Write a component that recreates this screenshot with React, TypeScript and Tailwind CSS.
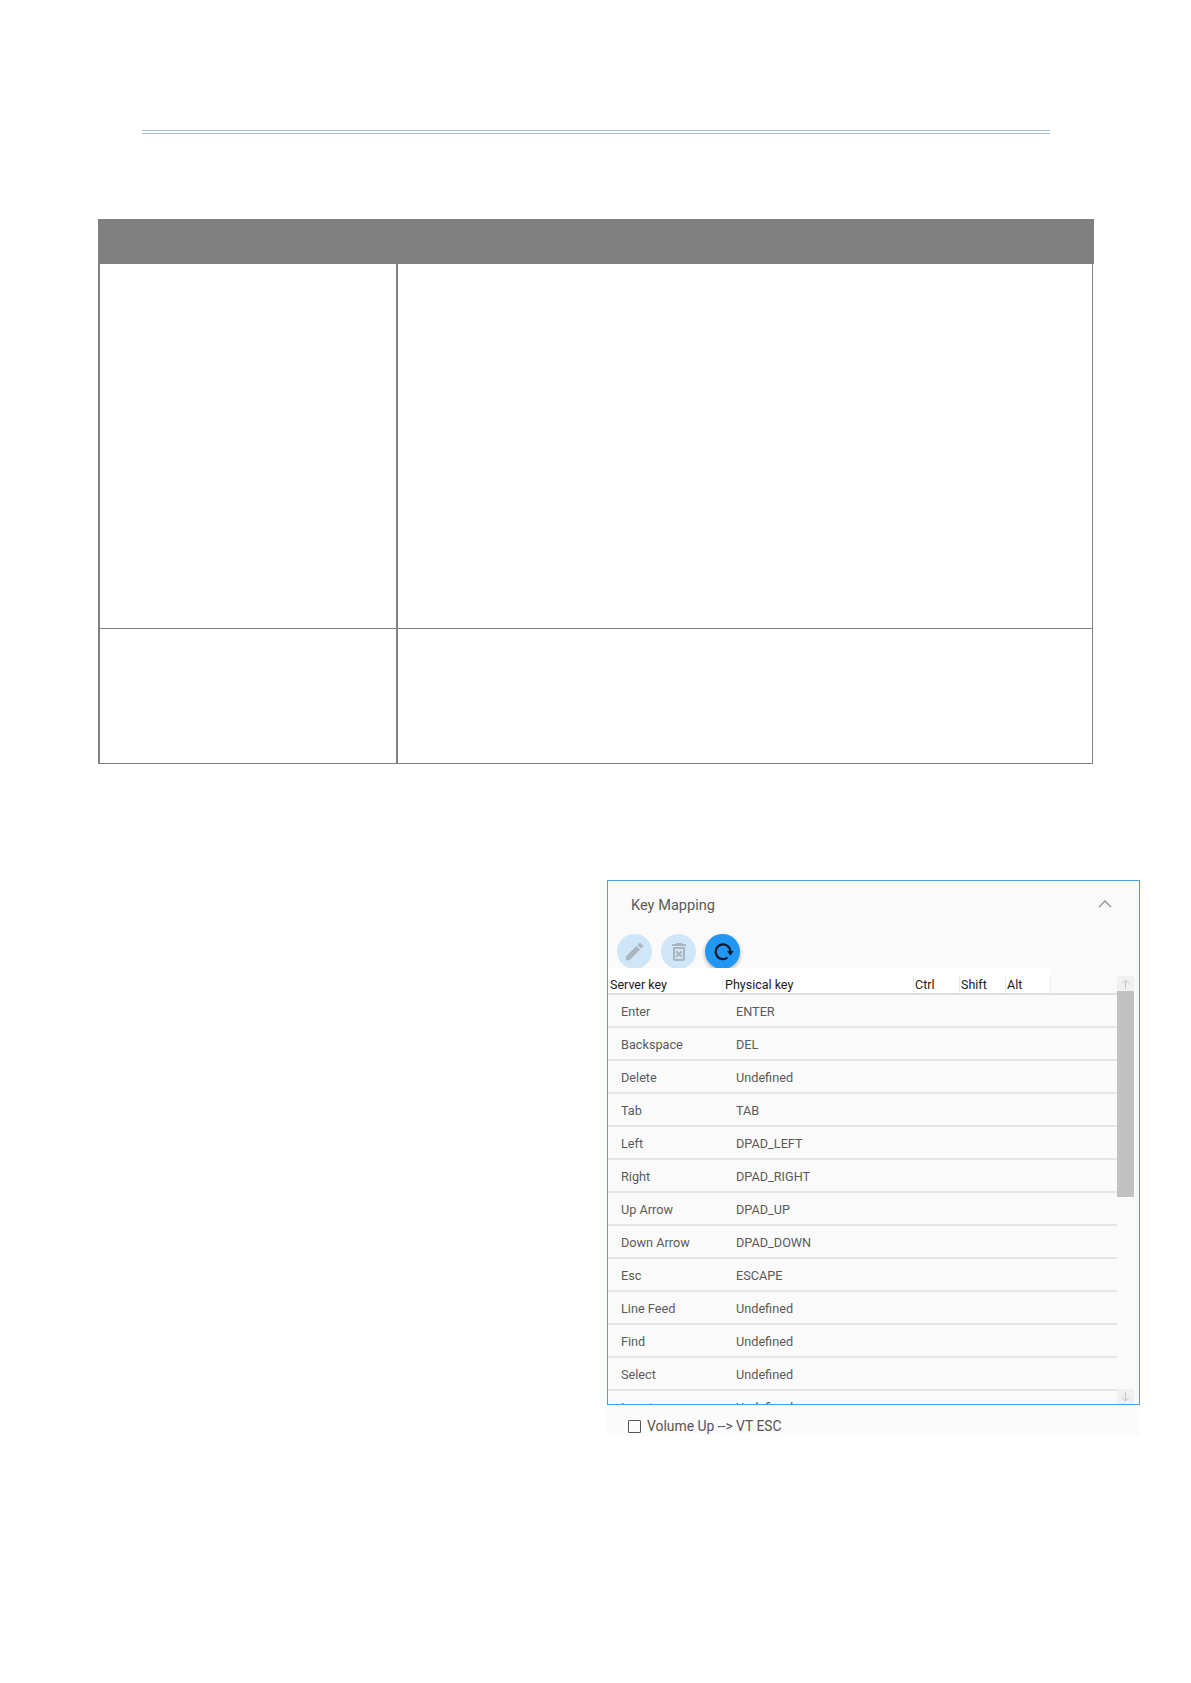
const rows = [
  ['Enter', 'ENTER'],
  ['Backspace', 'DEL'],
  ['Delete', 'Undefined'],
  ['Tab', 'TAB'],
  ['Left', 'DPAD_LEFT'],
  ['Right', 'DPAD_RIGHT'],
  ['Up Arrow', 'DPAD_UP'],
  ['Down Arrow', 'DPAD_DOWN'],
  ['Esc', 'ESCAPE'],
  ['Line Feed', 'Undefined'],
  ['Find', 'Undefined'],
  ['Select', 'Undefined'],
  ['Insert', 'Undefined'],
];

const RoundButton = ({ children, active }: { children: React.ReactNode; active?: boolean }) => (
  <div
    className={`w-[35px] h-[35px] rounded-full flex items-center justify-center ${
      active ? 'bg-[#2196f3] shadow-[0_2px_4px_rgba(0,0,0,0.3)]' : 'bg-[#cfe6f8]'
    }`}
  >
    {children}
  </div>
);

export default function App() {
  return (
    <div className="w-[1191px] h-[1683px] bg-white pt-[130px] font-['Roboto','Noto_Sans',sans-serif]">
      {/* double rule under the page header */}
      <div className="ml-[142px] w-[908px] h-[4px] border-y border-[#a3b9cc]" />

      {/* empty spec table */}
      <div className="ml-[98px] mt-[85px] w-[995px] border-l-2 border-r-[1.5px] border-b-[1.5px] border-[#808080]">
        <div className="-ml-[2px] -mr-[1.5px] h-[45px] bg-[#808080]" />
        <div className="grid grid-cols-[298px_1fr] h-[365px] border-b-[1.5px] border-[#808080]">
          <div className="border-r-2 border-[#808080]" />
          <div />
        </div>
        <div className="grid grid-cols-[298px_1fr] h-[134px]">
          <div className="border-r-2 border-[#808080]" />
          <div />
        </div>
      </div>

      {/* key mapping panel */}
      <div className="ml-[607px] mt-[116px] w-[533px]">
        <div className="h-[525px] border-[1.5px] border-[#4a9fe3] bg-[#fafafa] overflow-hidden flex flex-col">
          <div className="h-[53px] shrink-0 flex items-center justify-between pl-[23px] pr-[27px] pb-[4px]">
            <span className="text-[14.6px] text-[#5a5a5a]">Key Mapping</span>
            <svg className="-mt-[4px]" width="14" height="9" viewBox="0 0 14 9" fill="none" stroke="#a0a0a0" strokeWidth="1.6">
              <path d="M1 8l6-6 6 6" />
            </svg>
          </div>
          <div className="h-[34px] shrink-0 flex items-start gap-[9px] pl-[9px]">
            <RoundButton>
              <svg width="23" height="23" viewBox="0 0 24 24" fill="#a9b6c0">
                <path d="M3 17.25V21h3.75L17.81 9.94l-3.75-3.75L3 17.25zM20.71 7.04a1 1 0 000-1.41l-2.34-2.34a1 1 0 00-1.41 0l-1.83 1.83 3.75 3.75 1.83-1.83z" />
              </svg>
            </RoundButton>
            <RoundButton>
              <svg width="24" height="24" viewBox="0 0 24 24" fill="#a9b6c0">
                <path d="M14.12 10.47L12 12.59l-2.13-2.12-1.41 1.41L10.59 14l-2.12 2.12 1.41 1.41L12 15.41l2.12 2.12 1.41-1.41L13.41 14l2.12-2.12zM15.5 4l-1-1h-5l-1 1H5v2h14V4zM6 19c0 1.1.9 2 2 2h8c1.1 0 2-.9 2-2V7H6v12zM8 9h8v10H8V9z" />
              </svg>
            </RoundButton>
            <RoundButton active>
              <svg width="22" height="22" viewBox="0 0 24 24" fill="none">
                <path d="M17 18a8 8 0 1 1 3-6.5" stroke="#0b1a2b" strokeWidth="2.4" />
                <path d="M16.5 11h7L20 16z" fill="#0b1a2b" />
              </svg>
            </RoundButton>
          </div>
          <div className="flex-1 min-h-0 flex">
            <div className="w-[509px] shrink-0 min-w-0">
              <div className="h-[27px] border-b-2 border-[#dedede]">
                <div className="w-[443px] h-full bg-white flex pt-[8px] text-[12.5px] leading-[17px] text-[#1a1a1a]">
                  <div className="w-[115px] pl-[2px] border-r border-[#ececec]">Server key</div>
                  <div className="w-[191px] pl-[2px] border-r border-[#ececec]">Physical key</div>
                  <div className="w-[46px] pl-[1px] border-r border-[#ececec]">Ctrl</div>
                  <div className="w-[46px] pl-[1px] border-r border-[#ececec]">Shift</div>
                  <div className="w-[45px] pl-[1px] border-r border-[#ececec]">Alt</div>
                </div>
              </div>
              {rows.map(([server, physical]) => (
                <div key={server} className="h-[33px] shrink-0 border-b-2 border-[#e6e6e6] flex items-center pt-[3px] text-[12.7px] text-[#5a5a5a]">
                  <span className="w-[128px] pl-[13px]">{server}</span>
                  <span>{physical}</span>
                </div>
              ))}
            </div>
            <div className="w-[17px] shrink-0 mt-[8px] flex flex-col">
              <div className="h-[15px] shrink-0 bg-[#f0f0f0] flex items-center justify-center">
                <svg width="9" height="10" viewBox="0 0 9 10" fill="none" stroke="#c4c4c4" strokeWidth="1">
                  <path d="M4.5 10V1M1 4.5L4.5 1 8 4.5" />
                </svg>
              </div>
              <div className="h-[206px] shrink-0 bg-[#c1c1c1]" />
              <div className="flex-1" />
              <div className="h-[15px] shrink-0 bg-[#f0f0f0] flex items-center justify-center">
                <svg width="9" height="10" viewBox="0 0 9 10" fill="none" stroke="#c4c4c4" strokeWidth="1">
                  <path d="M4.5 0v9M1 5.5L4.5 9 8 5.5" />
                </svg>
              </div>
            </div>
          </div>
        </div>
        <div className="h-[31px] bg-[#fbfbfb] flex items-center pl-[21px] pt-[12px]">
          <span className="w-[13px] h-[13px] border-[1.5px] border-[#555] rounded-[1px] mr-[6px]" />
          <span className="text-[13.9px] text-[#555]">Volume Up --&gt; VT ESC</span>
        </div>
      </div>
    </div>
  );
}
